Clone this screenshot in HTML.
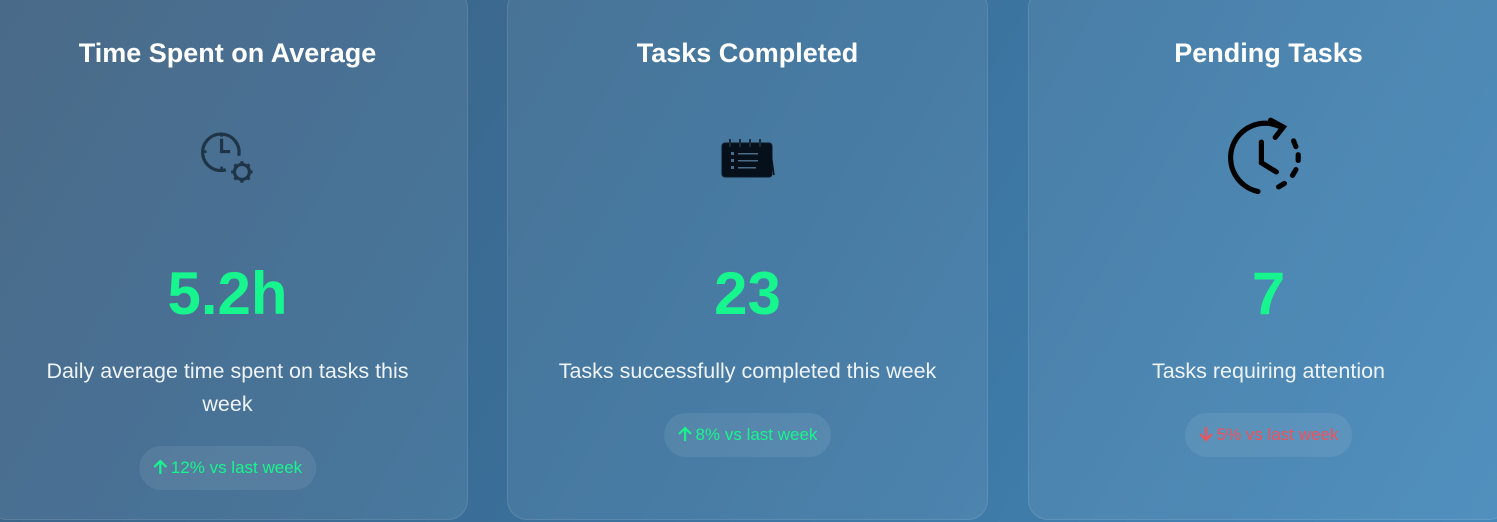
<!DOCTYPE html>
<html><head><style>
html,body{margin:0;width:1497px;height:522px;overflow:hidden;font-family:"Liberation Sans",sans-serif}
body{background:linear-gradient(120deg,#3d5f80 0%,#3a6f99 45%,#4488ba 100%);position:relative}
.card{position:absolute;top:-12px;height:532px;width:481px;box-sizing:border-box;border-radius:20px;background:rgba(255,255,255,0.07);border:1px solid rgba(255,255,255,0.10);text-align:center;color:#fff}
h2{position:absolute;left:0;right:0;top:49px;margin:0;font-size:27px;font-weight:bold}
.ic{position:absolute;left:50%;transform:translateX(-50%)}
.num{position:absolute;left:0;right:0;top:270px;font-size:60px;font-weight:bold;color:#17f58e}
.desc{position:absolute;left:50px;right:50px;top:366px;font-size:21.5px;line-height:33px;color:#eef3f8}
.pill{position:absolute;left:50%;transform:translateX(-50%);height:44px;line-height:44px;border-radius:22px;background:rgba(255,255,255,0.08);font-size:17px;padding:0 14px;white-space:nowrap}
.pill svg{vertical-align:-2px;margin-right:4px}
.up{color:#17f58e}.dn{color:#f0515a}
</style></head><body>
<div class="card" style="left:-13px">
<h2>Time Spent on Average</h2>
<svg class="ic" style="top:139px" width="60" height="60" viewBox="0 0 56 56" fill="none" stroke="#1f3547" stroke-width="3"><path d="M38 26A17 17 0 1 0 26 39"/><path d="M22 10v12h8"/><path d="M22 5v3M22 36v3M5 22h3" stroke-width="2.5"/><circle cx="41" cy="41" r="7"/><path d="M41 31v3M41 48v3M31 41h3M48 41h3M34 34l2 2M46 46l2 2M48 34l-2 2M34 48l2-2" stroke-width="3"/></svg>
<div class="num">5.2h</div>
<div class="desc">Daily average time spent on tasks this week</div>
<div class="pill up" style="top:457px"><svg width="14" height="16" viewBox="0 0 14 16" fill="none" stroke="#17f58e" stroke-width="2.2"><path d="M7 15V2M1 8l6-6 6 6"/></svg>12% vs last week</div>
</div>
<div class="card" style="left:507px">
<h2>Tasks Completed</h2>
<svg class="ic" style="top:148px" width="56" height="42" viewBox="0 0 56 42"><rect x="2" y="6" width="50" height="34" rx="3" fill="#05101a" stroke="#0b1a26"/><path d="M50 10l4 28" stroke="#05101a" stroke-width="1.5"/><g fill="none" stroke="#1a2c3a" stroke-width="2"><path d="M10 2v8M20 2v8M30 2v8M40 2v8"/></g><g fill="#4a6c8a"><rect x="11" y="15" width="3" height="3"/><rect x="11" y="22" width="3" height="3"/><rect x="11" y="29" width="3" height="3"/><rect x="18" y="16" width="20" height="1.5"/><rect x="18" y="23" width="20" height="1.5"/><rect x="18" y="30" width="18" height="1.5"/></g></svg>
<div class="num">23</div>
<div class="desc">Tasks successfully completed this week</div>
<div class="pill up" style="top:424px"><svg width="14" height="16" viewBox="0 0 14 16" fill="none" stroke="#17f58e" stroke-width="2.2"><path d="M7 15V2M1 8l6-6 6 6"/></svg>8% vs last week</div>
</div>
<div class="card" style="left:1028px">
<h2>Pending Tasks</h2>
<svg class="ic" style="top:122px;margin-left:-3px" width="92" height="92" viewBox="0 0 80 80" fill="none" stroke="#000" stroke-width="4.5" stroke-linecap="round"><path d="M53 14A30 30 0 1 0 33 70"/><path d="M44 8l11 6-7 9"/><path d="M36 27v18l13 8"/><path d="M64 26l2 5M68 38v5M66 51l-3 5M56 63l-5 3"/></svg>
<div class="num">7</div>
<div class="desc">Tasks requiring attention</div>
<div class="pill dn" style="top:424px"><svg width="14" height="16" viewBox="0 0 14 16" fill="none" stroke="#f0515a" stroke-width="2.2"><path d="M7 1v13M1 8l6 6 6-6"/></svg>5% vs last week</div>
</div>
</body></html>
